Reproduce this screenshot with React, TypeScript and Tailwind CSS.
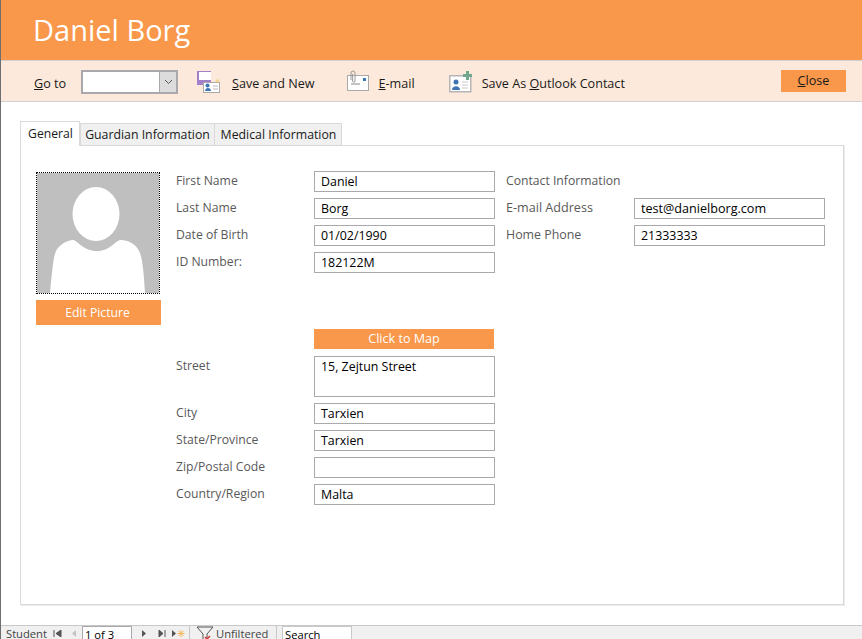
import React from "react";

const font = { fontFamily: '"Open Sans", "Noto Sans", sans-serif' };

function Field({ label, value, tall }: { label: string; value?: string; tall?: boolean }) {
  return (
    <div className="flex items-start">
      <div className="w-[138px] pt-[1px] text-[12.2px] leading-[18px] text-[#595959]">{label}</div>
      <div
        className={`w-[181px] border border-[#a9a9ad] bg-white pl-[6px] text-[12.4px] leading-[19px] text-black ${
          tall ? "h-[41px]" : "h-[21px]"
        }`}
      >
        {value}
      </div>
    </div>
  );
}

function SaveNewIcon() {
  return (
    <svg width="24" height="24" viewBox="0 0 24 24">
      <path d="M0 2h14v11H6v3H0z" fill="#a27fc9" />
      <rect x="2" y="3" width="12" height="8" fill="#fff" />
      <rect x="6.500" y="13.500" width="16" height="10" fill="#fff" stroke="#a9a9a9" />
      <circle cx="10.500" cy="16.500" r="2" fill="#3d75b5" />
      <path d="M8 22c0-4 6-4 6 0z" fill="#3d75b5" />
      <path d="M16 17h5M16 20h5" stroke="#bbb" />
      <path d="M20.500 10v4M18.500 12h4" stroke="#f2c879" />
    </svg>
  );
}

function EmailIcon() {
  return (
    <svg width="24" height="24" viewBox="0 0 24 24">
      <rect x="0.500" y="6.500" width="21" height="15" fill="#fff" stroke="#a9a9a9" />
      <rect x="16" y="9" width="3" height="3" fill="#3d75b5" />
      <path d="M4 15h9" stroke="#c4c4c4" strokeWidth="2" />
      <path d="M4 11V4a2 2 0 0 1 4 0v8a1.200 1.200 0 0 1-2.400 0V5" fill="none" stroke="#9a9a9a" />
    </svg>
  );
}

function ContactIcon() {
  return (
    <svg width="24" height="24" viewBox="0 0 24 24">
      <rect x="0.750" y="6.750" width="21" height="16" fill="#fff" stroke="#b5b5b5" strokeWidth="1.500" />
      <circle cx="7" cy="13" r="2.500" fill="#3d75b5" />
      <path d="M3 21c0-5 8-5 8 0z" fill="#3d75b5" />
      <path d="M13 13h6M13 16h6M13 19h6" stroke="#c9c9c9" />
      <path d="M17 2h3v3h3v3h-3v3h-3V8h-3V5h3z" fill="#6fa88f" />
    </svg>
  );
}

function Avatar() {
  return (
    <svg width="122" height="120" viewBox="0 0 122 120" className="block">
      <rect width="122" height="120" fill="#bfbfbf" />
      <ellipse cx="59" cy="41" rx="23.500" ry="27" fill="#fff" />
      <path
        d="M13 120 C15 100 16 85 19 78 C22 72 30 67 36 67 C40 67 46 78 60 78 C74 78 78 67 84 67 C92 67 100 72 103 80 C106 88 107 105 108 120 Z"
        fill="#fff"
      />
    </svg>
  );
}

function App() {
  return (
    <div
      className="flex h-[639px] w-[862px] flex-col overflow-hidden border-l border-[#6e6e6e] bg-white"
      style={font}
    >
      <div className="flex h-[60px] shrink-0 items-center bg-[#f9974a] pl-[32px] text-[29px] text-white">
        Daniel Borg
      </div>
      <div className="flex h-[42px] shrink-0 items-center border-y border-[#d0d0d0] bg-[#fde9db] text-[12.6px] text-[#1a1a1a]">
        <span className="ml-[33px] mt-[7px] w-[47px]">
          <u>G</u>o to
        </span>
        <div className="mt-[2px] flex h-[24px] w-[97px] border-2 border-[#a9a9ad] bg-white">
          <div className="flex-1" />
          <div className="flex w-[17px] items-center justify-center border-l border-[#a9a9ad] bg-[#dcdcdc]">
            <svg width="9" height="6" viewBox="0 0 9 6">
              <path d="M1 1l3.500 3.500L8 1" fill="none" stroke="#555" />
            </svg>
          </div>
        </div>
        <div className="ml-[19px] flex w-[24px]">
          <SaveNewIcon />
        </div>
        <span className="ml-[11px] mt-[7px]">
          <u>S</u>ave and New
        </span>
        <div className="ml-[32px] w-[24px]">
          <EmailIcon />
        </div>
        <span className="ml-[8px] mt-[7px]">
          <u>E</u>-mail
        </span>
        <div className="ml-[34px] w-[24px]">
          <ContactIcon />
        </div>
        <span className="ml-[9px] mt-[7px]">
          Save As <u>O</u>utlook Contact
        </span>
        <button className="ml-auto mr-[16px] h-[22px] w-[65px] bg-[#f9974a] pt-[1px] text-[12.6px] text-[#1a1a1a]">
          <u>C</u>lose
        </button>
      </div>

      <div className="flex flex-1 flex-col px-[19px] pt-[19px]">
        <div className="flex h-[24px] items-end text-[12.3px] text-[#1a1a1a]">
          <div className="z-10 -mb-[1px] flex h-[25px] w-[60px] items-center justify-center border border-b-0 border-[#d9d9d9] bg-white pl-[1px] text-[12.2px]">
            General
          </div>
          <div className="-mb-[1px] flex h-[23px] w-[135px] items-center justify-center border border-[#d9d9d9] bg-[#f0f0f0] pt-[2px]">
            Guardian Information
          </div>
          <div className="-mb-[1px] flex h-[23px] w-[127px] items-center justify-center border border-l-0 border-[#d9d9d9] bg-[#f0f0f0] pl-[1px] pt-[2px]">
            Medical Information
          </div>
        </div>
        <div className="flex h-[460px] w-[824px] border border-[#d9d9d9] pl-[15px] pt-[25px] shadow-[1px_1px_0_#ececec]">
          <div className="mt-[1px] w-[125px] shrink-0">
            <div className="w-[124px] border border-dotted border-black">
              <Avatar />
            </div>
            <div className="mt-[6px] flex h-[25px] items-center justify-center bg-[#f9974a] pr-[2px] pt-[1px] text-[12.2px] text-white">
              Edit Picture
            </div>
          </div>
          <div className="ml-[15px] flex w-[319px] shrink-0 flex-col gap-[6px]">
            <Field label="First Name" value="Daniel" />
            <Field label="Last Name" value="Borg" />
            <Field label="Date of Birth" value="01/02/1990" />
            <Field label="ID Number:" value="182122M" />
            <div className="mb-[1px] ml-[138px] mt-[50px] flex h-[20px] w-[180px] items-center justify-center bg-[#f9974a] text-[12.6px] text-white">
              Click to Map
            </div>
            <Field label="Street" value="15, Zejtun Street" tall />
            <Field label="City" value="Tarxien" />
            <Field label="State/Province" value="Tarxien" />
            <Field label="Zip/Postal Code" />
            <Field label="Country/Region" value="Malta" />
          </div>
          <div className="ml-[11px] flex w-[319px] shrink-0 flex-col gap-[6px]">
            <div className="h-[21px] pt-[1px] text-[12.2px] leading-[18px] text-[#595959]">Contact Information</div>
            <div className="flex items-start">
              <div className="w-[128px] pt-[1px] text-[12.6px] leading-[18px] text-[#595959]">E-mail Address</div>
              <div className="h-[21px] w-[191px] border border-[#a9a9ad] pl-[6px] text-[12.6px] leading-[19px] text-black">
                test@danielborg.com
              </div>
            </div>
            <div className="flex items-start">
              <div className="w-[128px] pt-[1px] text-[12.4px] leading-[18px] text-[#595959]">Home Phone</div>
              <div className="h-[21px] w-[191px] border border-[#a9a9ad] pl-[6px] text-[12.4px] leading-[19px] text-black">
                21333333
              </div>
            </div>
          </div>
        </div>
      </div>

      <div className="flex h-[14px] shrink-0 items-start border-t border-[#c8c8c8] bg-[#f0f0f0] pl-[5px] text-[11.2px] leading-[16px] text-[#444]">
        <span className="w-[47px]">Student</span>
        <span className="mt-[4px] h-[7px] w-[18px] text-[#444]">
          <svg width="9" height="7" viewBox="0 0 9 7">
            <path d="M1 0v7M8 0v7L3 3.500z" stroke="#555" fill="#555" strokeWidth="1" />
          </svg>
        </span>
        <span className="mt-[4px] w-[11px]">
          <svg width="6" height="7" viewBox="0 0 6 7">
            <path d="M5 0v7L1 3.500z" fill="#c4c4c4" />
          </svg>
        </span>
        <div className="h-[14px] w-[50px] border border-b-0 border-[#a9a9ad] bg-white pl-[2px] text-black">1 of 3</div>
        <span className="ml-[9px] mt-[4px] w-[15px]">
          <svg width="6" height="7" viewBox="0 0 6 7">
            <path d="M1 0v7l4-3.500z" fill="#555" />
          </svg>
        </span>
        <span className="ml-[2px] mt-[4px] w-[13px]">
          <svg width="8" height="7" viewBox="0 0 8 7">
            <path d="M1 0v7l4-3.500zM7 0v7" fill="#555" stroke="#555" />
          </svg>
        </span>
        <span className="mt-[3px] w-[18px]">
          <svg width="14" height="9" viewBox="0 0 14 9">
            <path d="M1 1v7l4-3.500z" fill="#555" />
            <path d="M10 1v7M6.500 4.500h7M7.500 2l5 5M12.500 2l-5 5" stroke="#f4b860" />
          </svg>
        </span>
        <div className="h-[14px] border-l border-[#c8c8c8] pl-[6px]">
          <svg width="19" height="14" viewBox="0 0 19 14">
            <path d="M1 1h16l-6 7v6M1 1l6 7v6" fill="none" stroke="#555" />
            <path d="M9 11l2 2 3-3" fill="none" stroke="#d33" strokeWidth="1.500" />
          </svg>
        </div>
        <span className="ml-[1px] w-[60px] whitespace-nowrap">Unfiltered</span>
        <div className="h-[14px] border-l border-[#c8c8c8] pl-[5px]">
          <div className="h-[14px] w-[70px] border border-b-0 border-[#c8c8c8] bg-white pl-[2px] text-black">Search</div>
        </div>
      </div>
    </div>
  );
}

export default App;
